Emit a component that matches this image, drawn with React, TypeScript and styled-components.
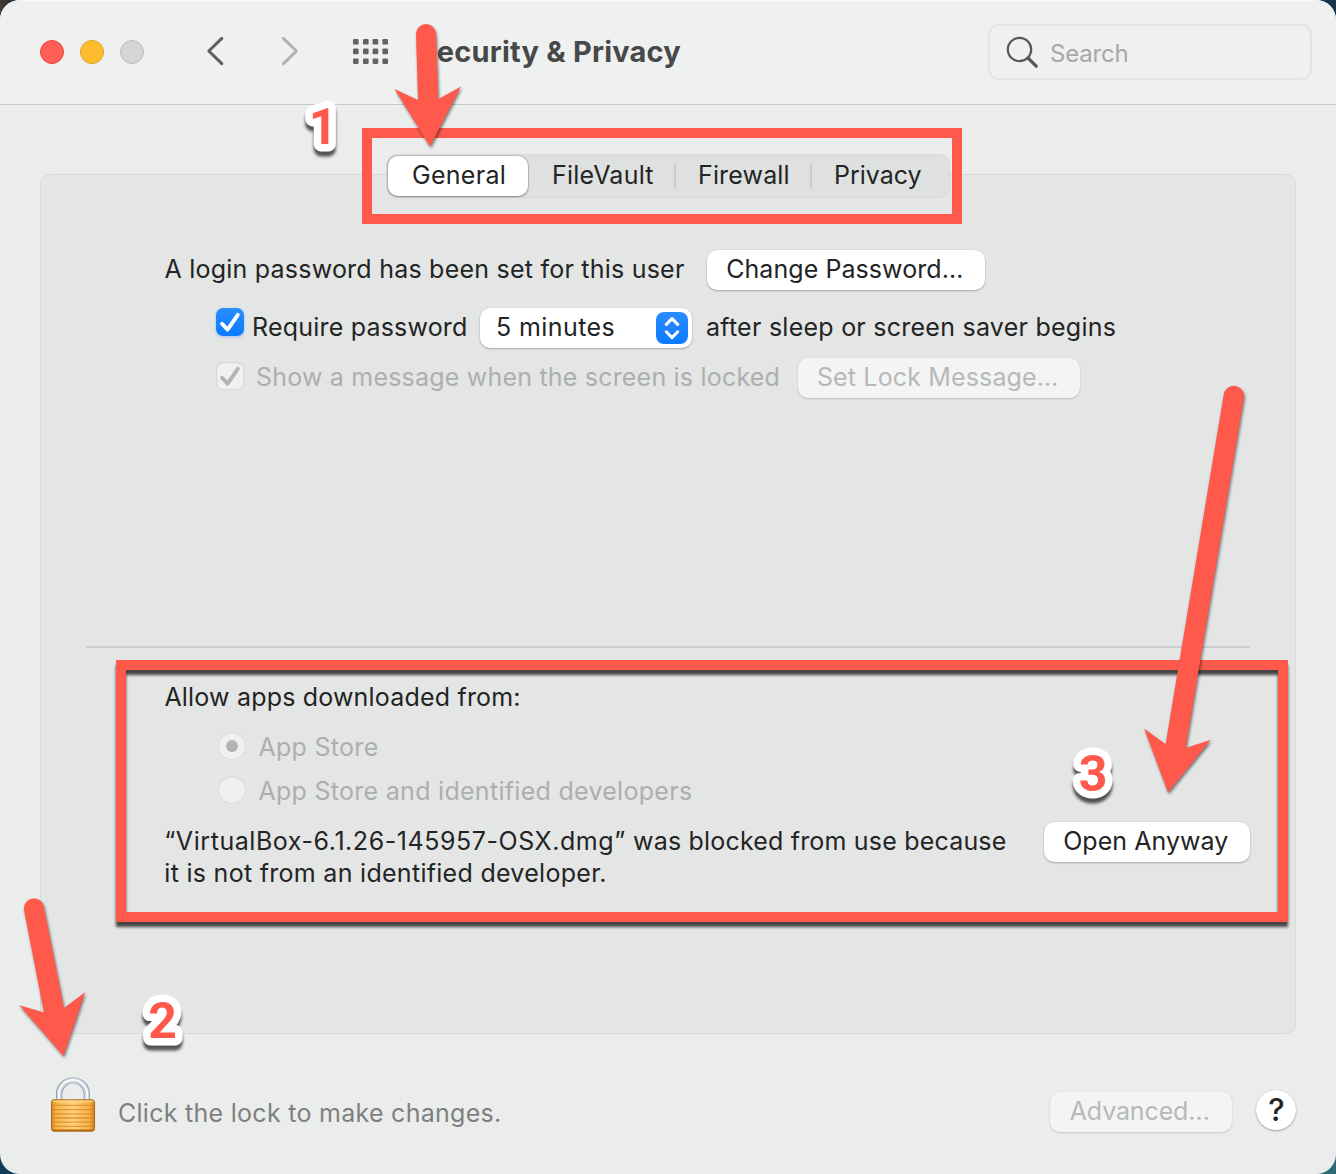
import React from "react";
import styled, { createGlobalStyle } from "styled-components";

const RED = "#ff594b";
const INK = "#232424";
const MUTED = "#adafae";

const GlobalStyle = createGlobalStyle`
  *, *::before, *::after { box-sizing: border-box; }
  body { margin: 0; background: #12344a; }
`;

const Desktop = styled.div`
  width: 1336px;
  height: 1174px;
  overflow: hidden;
  background:
    linear-gradient(to right, #4a3b36 0, #17303f 14px, transparent 30px) top left / 30px 30px no-repeat,
    linear-gradient(#0f3a55, #123d58) bottom left / 40px 40px no-repeat,
    linear-gradient(#2c6d78, #2c6a76) bottom right / 40px 40px no-repeat,
    #17344a;
  font-family: Inter, "Liberation Sans", sans-serif;
  font-size: 25px;
  color: ${INK};
`;

const Window = styled.main`
  position: relative;
  display: flex;
  flex-direction: column;
  width: 1336px;
  height: 1174px;
  border-radius: 20px;
  overflow: hidden;
  background: #ebedec;
`;

const TitleBar = styled.header`
  display: flex;
  align-items: center;
  flex: none;
  height: 105px;
  padding: 0 24px 1px 40px;
  background: #eff1f0;
  border-top: 1px solid #f8f9f9;
  border-bottom: 1px solid #c6c9c8;
`;

const Lights = styled.div`
  display: flex;
  gap: 16px;
`;

const Light = styled.span<{ $fill: string; $edge: string }>`
  width: 24px;
  height: 24px;
  border-radius: 50%;
  background: ${(p) => p.$fill};
  border: 1px solid ${(p) => p.$edge};
`;

const NavIcons = styled.svg`
  flex: none;
  width: 190px;
  height: 40px;
  margin-left: 56px;
`;

const Title = styled.h1`
  margin: 0 auto 0 27.6px;
  font-size: 29px;
  line-height: 36px;
  font-weight: 650;
  letter-spacing: 0.2px;
  color: #474848;
  white-space: nowrap;
`;

const SearchBox = styled.div`
  display: flex;
  align-items: center;
  width: 324px;
  height: 56px;
  padding: 2px 0 0 14px;
  border: 2px solid #e2e4e3;
  border-radius: 11px;
  font-size: 24px;
  letter-spacing: -0.2px;
  color: #a6a8a7;
`;

const SearchIcon = styled.svg`
  width: 36px;
  height: 36px;
  margin: 0 10px 2px 0;
`;

const Panel = styled.section`
  display: flex;
  flex-direction: column;
  flex: none;
  height: 860px;
  margin: 69px 40px 0;
  border: 1px solid #d9dbda;
  border-radius: 10px;
  background: #e4e6e5;
`;

const Tabs = styled.nav`
  display: flex;
  align-items: center;
  align-self: center;
  flex: none;
  width: 564px;
  height: 44px;
  margin-top: -21px;
  padding: 0 1px;
  border: 1px solid #d7d9d8;
  border-radius: 11px;
  background: #dfe1e0;
`;

const Tab = styled.div<{ $width: number; $inset: number; $track?: number; $selected?: boolean }>`
  width: ${(p) => p.$width}px;
  height: 40px;
  padding-left: ${(p) => p.$inset}px;
  line-height: 38px;
  letter-spacing: ${(p) => p.$track ?? 0}px;
  border-radius: 10px;
  ${(p) => p.$selected && "background: #fff; box-shadow: 0 0 1px 0.5px rgba(0,0,0,.14), 0 1px 2px rgba(0,0,0,.28);"}
`;

const TabSeparator = styled.span`
  width: 2px;
  height: 24px;
  background: #cbcdcc;
`;

const Row = styled.div<{ $top: number; $indent: number; $gap?: number }>`
  display: flex;
  align-items: flex-start;
  flex: none;
  margin-top: ${(p) => p.$top}px;
  padding-left: ${(p) => p.$indent}px;
  gap: ${(p) => p.$gap ?? 0}px;
`;

const Label = styled.span<{ $width?: number; $line?: number; $track?: number; $muted?: boolean }>`
  flex: none;
  width: ${(p) => (p.$width ? p.$width + "px" : "auto")};
  line-height: ${(p) => p.$line ?? 38}px;
  letter-spacing: ${(p) => p.$track ?? 0.2}px;
  color: ${(p) => (p.$muted ? MUTED : INK)};
  white-space: nowrap;
`;

const Line = styled.span<{ $track: number }>`
  display: block;
  letter-spacing: ${(p) => p.$track}px;
`;

const FileName = styled.span`
  letter-spacing: 0.56px;
`;

const Button = styled.button<{ $width: number; $track?: number; $lift?: number }>`
  flex: none;
  width: ${(p) => p.$width}px;
  height: 40px;
  margin: ${(p) => -(p.$lift ?? 0)}px 0 0;
  padding: 0 2.5px 2px 0;
  border: 0;
  border-radius: 10px;
  background: #fff;
  box-shadow: 0 0 1px rgba(0, 0, 0, 0.2), 0 1px 2px rgba(0, 0, 0, 0.26);
  font: inherit;
  line-height: 38px;
  letter-spacing: ${(p) => p.$track ?? 0}px;
  color: ${INK};
  &:disabled {
    background: #f3f4f4;
    color: #b7b9b8;
    box-shadow: 0 0 1px rgba(0, 0, 0, 0.12), 0 1px 2px rgba(0, 0, 0, 0.14);
  }
`;

const CheckBox = styled.span<{ $on?: boolean; $top?: number }>`
  flex: none;
  width: 28px;
  height: 28px;
  margin-top: ${(p) => p.$top ?? 0}px;
  border-radius: 7px;
  ${(p) =>
    p.$on
      ? "background: linear-gradient(#2a8dff, #0a7aff); box-shadow: 0 1px 3px rgba(20,110,240,.35);"
      : "background: #eff0f0; box-shadow: inset 0 0 0 1px #d6d8d7, inset 0 1px 2px rgba(0,0,0,.06);"}
  svg { display: block; }
`;

const Select = styled.div`
  display: flex;
  justify-content: space-between;
  flex: none;
  width: 212px;
  height: 40px;
  margin-right: 14px;
  padding: 0 4px 0 16px;
  border-radius: 10px;
  background: #fff;
  box-shadow: 0 0 1px rgba(0, 0, 0, 0.2), 0 1px 2px rgba(0, 0, 0, 0.26);
`;

const Stepper = styled.span`
  width: 32px;
  height: 32px;
  margin-top: 4px;
  border-radius: 8px;
  background: linear-gradient(#2a8dff, #0a7aff);
  svg { display: block; }
`;

const Divider = styled.hr`
  flex: none;
  height: 2px;
  margin: 248px 45px 0;
  border: 0;
  background: #cccecd;
`;

const Radio = styled.span<{ $on?: boolean }>`
  display: flex;
  align-items: center;
  justify-content: center;
  width: 28px;
  height: 28px;
  border-radius: 50%;
  background: #eff0f0;
  box-shadow: inset 0 0 0 1px #d9dbda, inset 0 1px 2px rgba(0, 0, 0, 0.06);
  &::after {
    content: "";
    width: 12px;
    height: 12px;
    border-radius: 50%;
    background: ${(p) => (p.$on ? "#b2b3b3" : "transparent")};
  }
`;

const Footer = styled.footer`
  display: flex;
  align-items: center;
  flex: 1;
  padding: 16px 40px 0 47px;
`;

const Hint = styled.p`
  margin: 2px auto 0 19px;
  line-height: 32px;
  letter-spacing: 0.277px;
  color: #7e807f;
`;

const LockIcon = styled.svg`
  width: 52px;
  height: 62px;
  margin-bottom: 14px;
`;

const HelpButton = styled.button`
  width: 40px;
  height: 40px;
  margin: 0 0 4px 24px;
  padding: 0 0 0 1px;
  border: 0;
  border-radius: 50%;
  background: #fff;
  box-shadow: 0 0 1px rgba(0, 0, 0, 0.2), 0 1px 2px rgba(0, 0, 0, 0.3);
  font: inherit;
  font-size: 31px;
  font-weight: 500;
  line-height: 40px;
  color: ${INK};
`;

const Highlight = styled.div<{ $x: number; $y: number; $w: number; $h: number; $shadow?: boolean }>`
  position: absolute;
  left: ${(p) => p.$x}px;
  top: ${(p) => p.$y}px;
  width: ${(p) => p.$w}px;
  height: ${(p) => p.$h}px;
  border: 10px solid ${RED};
  ${(p) => p.$shadow && "filter: drop-shadow(0 5px 1.8px rgba(0,0,0,.7));"}
`;

const Markup = styled.svg`
  position: absolute;
  inset: 0;
  pointer-events: none;
  .arrow { fill: ${RED}; filter: drop-shadow(1px 2px 1.5px rgba(0, 0, 0, 0.5)); }
`;

const StepNumber = styled.text`
  font: 700 50px Roboto, "Liberation Sans", sans-serif;
  fill: ${RED};
  stroke: #fff;
  stroke-width: 15px;
  stroke-linejoin: round;
  paint-order: stroke;
  text-anchor: middle;
  filter: drop-shadow(0 5px 1.5px rgba(0, 0, 0, 0.65));
`;

function Tick({ color }: { color: string }) {
  return (
    <svg width="28" height="28" viewBox="0 0 28 28" fill="none" stroke={color} strokeWidth="3.8" strokeLinecap="round" strokeLinejoin="round">
      <path d="M6 15.8 11.6 21.6 21.8 6.8" />
    </svg>
  );
}

function Padlock() {
  return (
    <LockIcon viewBox="0 0 52 62">
      <defs>
        <linearGradient id="brass" x1="0" x2="1" y1="0" y2="0">
          <stop offset="0" stopColor="#e08a1e" />
          <stop offset=".12" stopColor="#f9b54a" />
          <stop offset=".5" stopColor="#ffd27a" />
          <stop offset=".88" stopColor="#f8b148" />
          <stop offset="1" stopColor="#d67f18" />
        </linearGradient>
        <linearGradient id="steel" x1="0" x2="1" y1="0" y2="0">
          <stop offset="0" stopColor="#8f99a2" />
          <stop offset=".5" stopColor="#b9c1c8" />
          <stop offset="1" stopColor="#8f99a2" />
        </linearGradient>
      </defs>
      <path d="M12.2 28V20a13.8 13.6 0 0 1 27.6 0v8" fill="none" stroke="url(#steel)" strokeWidth="6.4" />
      <path d="M12.2 28V20a13.8 13.6 0 0 1 27.6 0v8" fill="none" stroke="#c9d2da" strokeWidth="4.8" />
      <path d="M11.9 28V20a14.1 13.9 0 0 1 28.2 0v8" fill="none" stroke="#f7f9fb" strokeWidth="2" />
      <rect x="4.5" y="25.8" width="43" height="31.4" rx="2.5" fill="url(#brass)" stroke="#a86418" strokeWidth="1" />
      <path d="M6 27.2h40" stroke="#ffe0a0" strokeWidth="1" />
      <path d="M5 31.4h42M5 35.6h42M5 39.8h42M5 44h42M5 48.2h42M5 52.4h42" stroke="#d48426" strokeWidth="1.3" opacity=".75" />
      <path d="M5.5 56.2h41" stroke="#b0660f" strokeWidth="1.4" />
    </LockIcon>
  );
}

export default function App() {
  return (
    <Desktop>
      <GlobalStyle />
      <Window>
        <TitleBar>
          <Lights>
            <Light $fill="#ff5f57" $edge="#e2463f" />
            <Light $fill="#febc2e" $edge="#e0a028" />
            <Light $fill="#d4d6d5" $edge="#bcbebd" />
          </Lights>
          <NavIcons viewBox="200 32 190 40" fill="none" strokeLinecap="round" strokeLinejoin="round">
            <path d="M221.8 38.4 208.8 51 221.8 63.6" stroke="#5e605f" strokeWidth="3" />
            <path d="M283.4 38.4 296.4 51 283.4 63.6" stroke="#b0b2b1" strokeWidth="3" />
            {[39, 48.6, 58.4].map((y) =>
              [353, 363, 372.6, 382.4].map((x) => (
                <rect key={`${x}-${y}`} x={x} y={y} width="5.6" height="5.6" rx="1.2" fill="#616362" />
              ))
            )}
          </NavIcons>
          <Title>Security &amp; Privacy</Title>
          <SearchBox>
            <SearchIcon viewBox="1004 34 36 36" fill="none" stroke="#565857" strokeLinecap="round">
              <circle cx="1019.5" cy="49.5" r="11.7" strokeWidth="2.2" />
              <path d="M1028 58 1036.2 66.2" strokeWidth="3.2" />
            </SearchIcon>
            Search
          </SearchBox>
        </TitleBar>

        <Panel>
          <Tabs>
            <Tab $width={140} $inset={24} $track={0.28} $selected>General</Tab>
            <Tab $width={146} $inset={24} $track={0.24}>FileVault</Tab>
            <TabSeparator />
            <Tab $width={134} $inset={22} $track={0.15}>Firewall</Tab>
            <TabSeparator />
            <Tab $width={130} $inset={22}>Privacy</Tab>
          </Tabs>

          <Row $top={52} $indent={123.4}>
            <Label $width={542.6} $track={0.23}>A login password has been set for this user</Label>
            <Button $width={278} $track={0.07}>Change Password…</Button>
          </Row>
          <Row $top={18} $indent={175}>
            <CheckBox $on><Tick color="#fff" /></CheckBox>
            <Row $top={0} $indent={8}>
              <Label $width={228} $track={0.2}>Require password</Label>
              <Select>
                <Label $track={0.4}>5 minutes</Label>
                <Stepper>
                  <svg width="32" height="32" viewBox="0 0 32 32" fill="none" stroke="#fff" strokeWidth="3" strokeLinecap="round" strokeLinejoin="round">
                    <path d="M10.3 12.4 16 6.6 21.7 12.4M10.3 19.8 16 25.6 21.7 19.8" />
                  </svg>
                </Stepper>
              </Select>
              <Label $track={0.25}>after sleep or screen saver begins</Label>
            </Row>
          </Row>
          <Row $top={10} $indent={175} $gap={12}>
            <CheckBox $top={4}><Tick color="#b2b3b3" /></CheckBox>
            <Label $width={530} $track={0.2} $muted>Show a message when the screen is locked</Label>
            <Button $width={282} $track={0.15} disabled>Set Lock Message…</Button>
          </Row>

          <Divider />

          <Row $top={33} $indent={123.4}>
            <Label $line={32} $track={0.19}>Allow apps downloaded from:</Label>
          </Row>
          <Row $top={19} $indent={177} $gap={12.4}>
            <Radio $on />
            <Label $line={30} $track={0.3} $muted>App Store</Label>
          </Row>
          <Row $top={14} $indent={177} $gap={12.4}>
            <Radio />
            <Label $line={30} $track={0.29} $muted>App Store and identified developers</Label>
          </Row>
          <Row $top={19} $indent={123.3}>
            <Label $width={879.7} $line={32}>
              <Line $track={0.19}><FileName>“VirtualBox-6.1.26-145957-OSX.dmg”</FileName> was blocked from use because</Line>
              <Line $track={0.29}>it is not from an identified developer.</Line>
            </Label>
            <Button $width={206} $track={0.04} $lift={3}>Open Anyway</Button>
          </Row>
        </Panel>

        <Footer>
          <Padlock />
          <Hint>Click the lock to make changes.</Hint>
          <Button $width={182} $track={-0.135} disabled>Advanced…</Button>
          <HelpButton>?</HelpButton>
        </Footer>

        <Highlight $x={362} $y={128} $w={600} $h={96} />
        <Highlight $x={116} $y={660} $w={1172} $h={262} $shadow />
        <Markup width="1336" height="1174" viewBox="0 0 1336 1174">
          <path className="arrow" d="M416 34a10 10 0 0 1 20 0L438.4 99 461 86.5 430 146.5 394.5 89 418 100Z" />
          <path className="arrow" d="M1223.7 394.5a10.2 10.2 0 0 1 20.2 3L1185.7 748 1210.7 739.7 1168 792.5 1144.3 728.7 1165.6 744.3Z" />
          <path className="arrow" d="M23.8 909a10.2 10.2 0 0 1 19.8-3.8L64 1008 85 992.3 63.5 1056 19.3 1005.3 44 1012.5Z" />
          <StepNumber x="323" y="144.3">1</StepNumber>
          <StepNumber x="162.5" y="1037.5">2</StepNumber>
          <StepNumber x="1093" y="790.5">3</StepNumber>
        </Markup>
      </Window>
    </Desktop>
  );
}
